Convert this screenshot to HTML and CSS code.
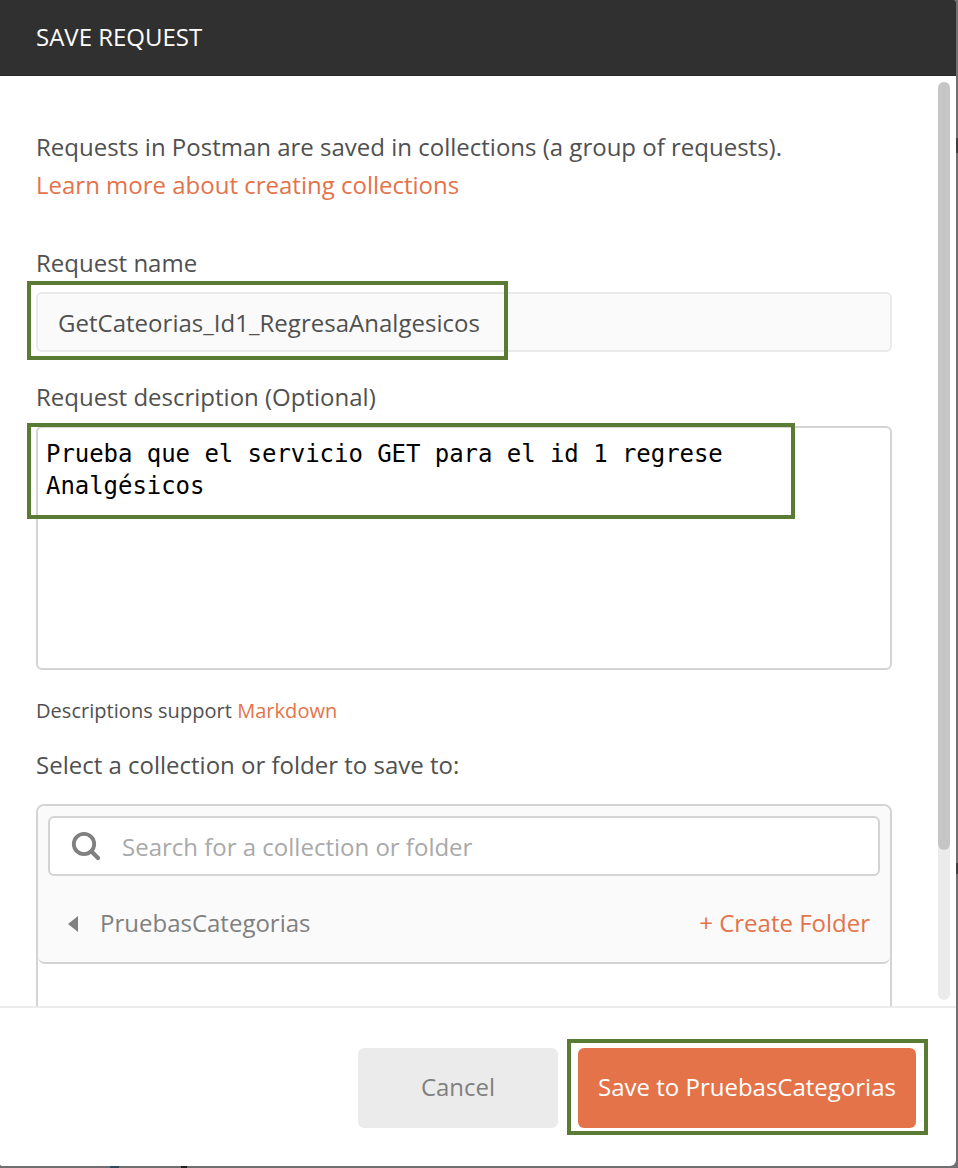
FILE: index.html
```html
<!DOCTYPE html>
<html lang="en">
<head>
<meta charset="utf-8">
<title>Save Request</title>
<link rel="stylesheet" href="styles.css">
</head>
<body>
<div class="backdrop">
  <div class="modal">
    <header class="modal-header">SAVE REQUEST</header>
    <main class="modal-body">
      <div class="form">
        <p class="intro">Requests in Postman are saved in collections (a group of requests).<br><a class="link">Learn more about creating collections</a></p>
        <label class="label name-label">Request name</label>
        <div class="field name-field">GetCateorias_Id1_RegresaAnalgesicos<div class="mark mark-name"></div></div>
        <label class="label desc-label">Request description (Optional)</label>
        <div class="field desc-field">Prueba que el servicio GET para el id 1 regrese<br>Analgésicos<div class="mark mark-desc"></div></div>
        <p class="hint">Descriptions support <a class="link">Markdown</a></p>
        <p class="label select-label">Select a collection or folder to save to:</p>
        <section class="picker">
          <div class="picker-head">
            <div class="search">
              <svg width="32" height="32" viewBox="0 0 32 32" fill="none" stroke="#808080"><circle cx="14" cy="14" r="10.2" stroke-width="3.8"/><path d="M21.5 21.5 28 28" stroke-width="4.2" stroke-linecap="round"/></svg>
              <span class="search-text">Search for a collection or folder</span>
            </div>
            <div class="crumb">
              <svg class="arrow" width="10" height="16" viewBox="0 0 10 16"><path d="M10 0v16L0 8z" fill="#808080"/></svg>
              <span class="crumb-name">PruebasCategorias</span>
              <a class="link">+ Create Folder</a>
            </div>
          </div>
        </section>
      </div>
      <div class="scrollbar"><div class="thumb"></div></div>
    </main>
    <footer class="modal-footer">
      <div class="btn cancel">Cancel</div>
      <div class="btn save">Save to PruebasCategorias<div class="mark mark-save"></div></div>
    </footer>
  </div>
</div>
</body>
</html>
```
FILE: styles.css
```css
* { box-sizing: border-box; }
body {
  margin: 0;
  font: 24px/32px "Open Sans", sans-serif;
  color: #505050;
  white-space: nowrap;
}
p { margin: 0; }
.backdrop {
  width: 958px;
  height: 1168px;
  padding: 0 2px 2px 0;
  background:
    linear-gradient(#404042, #404042) 956px 138px / 2px 15px no-repeat,
    linear-gradient(#404042, #404042) 956px 863px / 2px 11px no-repeat,
    linear-gradient(#2f4a5a, #2f4a5a) 110px 1166px / 9px 2px no-repeat,
    linear-gradient(#202020, #202020) 181px 1166px / 6px 2px no-repeat,
    #707072;
  overflow: hidden;
}
.modal {
  display: flex;
  flex-direction: column;
  height: 1166px;
  background: #fff;
  border-radius: 0 2px 6px 2px;
  overflow: hidden;
}
.modal-header {
  height: 76px;
  padding: 21px 36px;
  background: #303030;
  border-bottom: 1px solid #282828;
  color: #fff;
}
.modal-body {
  display: flex;
  justify-content: space-between;
  height: 930px;
  padding: 0 6px 0 36px;
  overflow: hidden;
}
.form { width: 856px; padding-top: 52px; }
.intro { line-height: 38px; height: 76px; }
.link { color: #e4734a; }
.label { display: block; height: 32px; }
.name-label { margin: 43px 0 13px; }
.field {
  position: relative;
  border: 2px solid #d4d4d4;
  border-radius: 6px;
}
.name-field {
  height: 60px;
  padding: 13px 20px;
  background: #fafafa;
  border-color: #eaeaea;
  letter-spacing: 0.02px;
}
.desc-label { margin: 29px 0 13px; }
.desc-field {
  height: 244px;
  padding: 10px 8px;
  font-family: "DejaVu Sans Mono", monospace;
  letter-spacing: -0.05px;
  color: #000;
}
.mark {
  position: absolute;
  border: 4px solid #5a7b33;
}
.mark-name { left: -11px; top: -13px; width: 481px; height: 79px; }
.mark-desc { left: -11px; top: -5px; width: 768px; height: 96px; }
.mark-save { left: -11px; top: -9px; width: 361px; height: 96px; }
.hint { margin-top: 26px; font-size: 20px; line-height: 30px; letter-spacing: 0.04px; }
.select-label { margin-top: 23px; }
.picker {
  height: 260px;
  margin-top: 23px;
  border: 2px solid #d4d4d4;
  border-radius: 8px;
}
.picker-head {
  height: 158px;
  padding: 10px;
  background: #fafafa;
  border-bottom: 2px solid #d4d4d4;
  border-radius: 7px;
}
.search {
  display: flex;
  align-items: center;
  gap: 20px;
  height: 60px;
  padding-left: 20px;
  background: #fff;
  border: 2px solid #d4d4d4;
  border-radius: 6px;
  color: #a9a9a9;
}
.search-text { padding-top: 2px; }
.crumb {
  display: flex;
  align-items: center;
  gap: 22px;
  height: 32px;
  margin-top: 31px;
  padding: 0 10px 0 20px;
  color: #808080;
}
.arrow { margin-top: 2px; }
.crumb-name { flex: 1; }
.scrollbar {
  width: 12px;
  height: 918px;
  margin-top: 6px;
  border-radius: 6px;
  background: #ebebeb;
}
.thumb { height: 768px; border-radius: 6px; background: #c6c6c6; }
.modal-footer {
  display: flex;
  justify-content: flex-end;
  gap: 20px;
  height: 160px;
  padding: 40px;
  border-top: 2px solid #ebebeb;
}
.btn {
  position: relative;
  height: 80px;
  line-height: 78px;
  text-align: center;
  border-radius: 6px;
}
.cancel { width: 200px; background: #ebebeb; color: #808080; }
.save { width: 338px; background: #e4734a; color: #fff; }
```
